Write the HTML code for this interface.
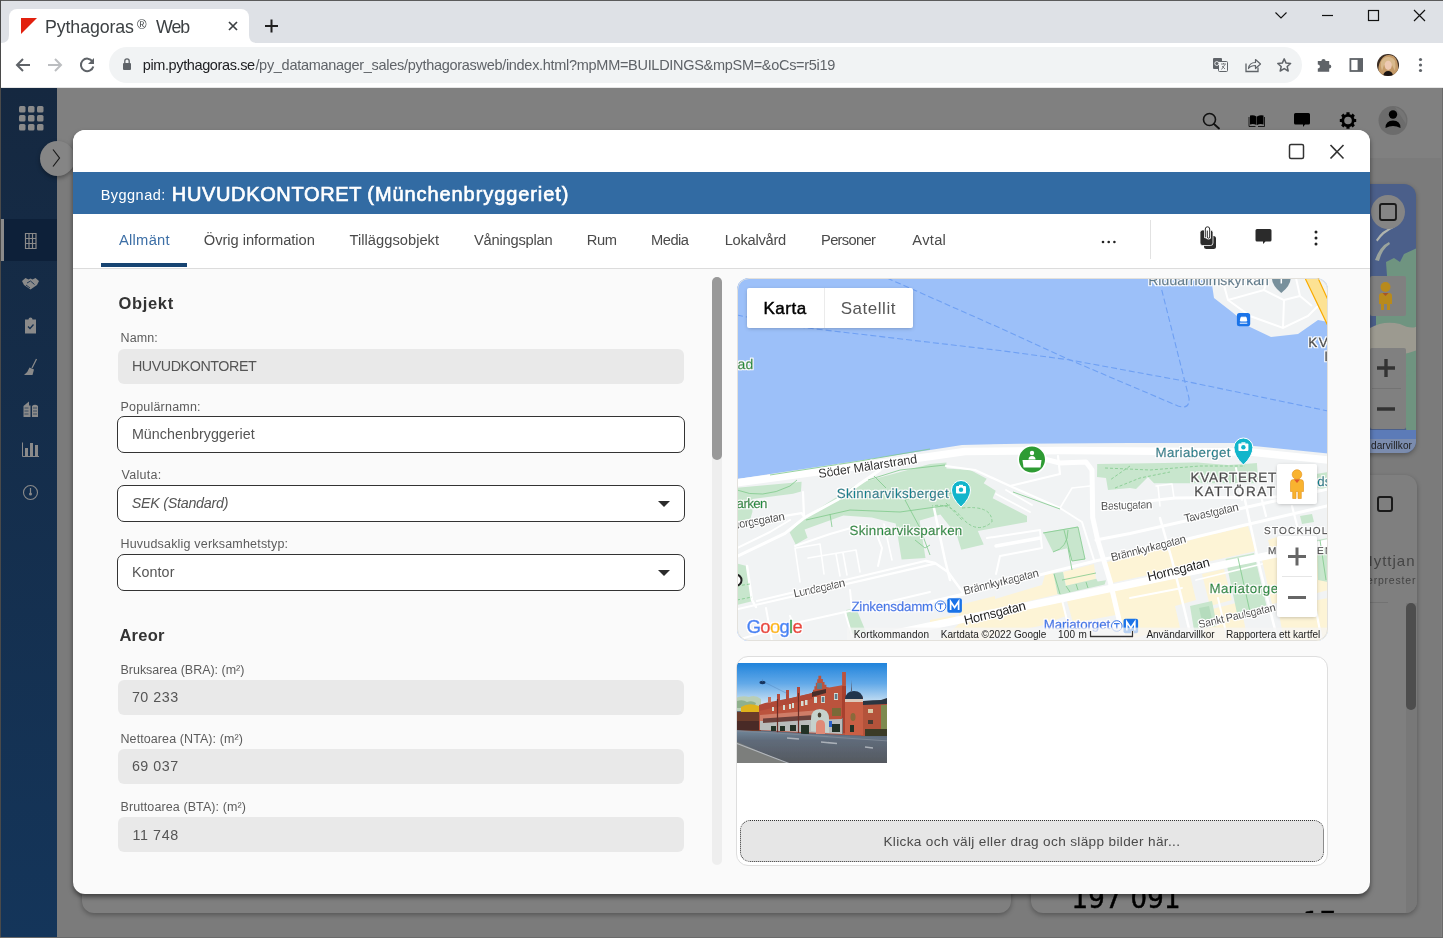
<!DOCTYPE html>
<html lang="sv">
<head>
<meta charset="utf-8">
<title>Pythagoras® Web</title>
<style>
*{box-sizing:border-box;margin:0;padding:0}
html,body{width:1443px;height:938px;overflow:hidden}
body{position:relative;background:#808080;font-family:"Liberation Sans",sans-serif;color:#333}
.abs{position:absolute}
/* browser chrome */
#chrome{position:absolute;left:0;top:0;width:1443px;height:88px;background:#fff}
#tabstrip{position:absolute;left:0;top:0;width:1443px;height:43px;background:#dee1e6}
#wintop{position:absolute;left:0;top:0;width:1443px;height:1px;background:#5b5b5b}
#winleft{position:absolute;left:0;top:0;width:1px;height:938px;background:#4a4a4a}
#tab{position:absolute;left:9px;top:9px;width:240px;height:34px;background:#fff;border-radius:8px 8px 0 0}
#tab .title{position:absolute;left:36px;top:5px;font-size:18px;color:#3c4043;white-space:nowrap;line-height:24px}
#omni{position:absolute;left:109px;top:47px;width:1193px;height:36px;border-radius:18px;background:#f1f3f4}
#url{position:absolute;left:34px;top:9px;font-size:14px;line-height:18px;color:#5f6368;white-space:nowrap}
#url b{font-weight:normal;color:#202124}
#chromeline{position:absolute;left:0;top:87px;width:1443px;height:1px;background:#e6e6e6}
/* app */
#sidebar{position:absolute;left:1px;top:88px;width:56px;height:850px;background:linear-gradient(#152840,#14355a)}
#navactive{position:absolute;left:0;top:131px;width:56px;height:42px;background:#0d2039}
#navactive:before{content:"";position:absolute;left:0;top:0;width:3px;height:42px;background:#8b8b8b}
/* dialog */
#dialog{position:absolute;left:73px;top:130px;width:1297px;height:764px;background:#fafafa;border-radius:12px;box-shadow:0 3px 5px rgba(0,0,0,.5);overflow:hidden}
#dhead{position:absolute;left:0;top:0;width:1297px;height:42px;background:#fff}
#dtitle{position:absolute;left:0;top:42px;width:1297px;height:42px;background:#326ba3;color:#fff;white-space:nowrap}
#dtitle .l{position:absolute;left:28px;top:14px;font-size:15px;line-height:18px}
#dtitle .t{position:absolute;left:99px;top:8px;font-size:21px;line-height:26px;font-weight:bold}
#tabs{position:absolute;left:0;top:84px;width:1297px;height:55px;background:#fff;border-bottom:1px solid #dcdcdc}
#tabs span{position:absolute;top:16px;font-size:15px;line-height:18px;color:#4a4a4a;white-space:nowrap}
#tabs .a{color:#3a6ea5}
#tabul{position:absolute;left:28px;top:133px;width:86px;height:4px;background:#174472}
.h{position:absolute;font-size:17px;font-weight:bold;color:#333;line-height:20px;white-space:nowrap}
.lb{position:absolute;font-size:13px;color:#555;line-height:16px;white-space:nowrap}
.ro{position:absolute;left:45px;width:566px;height:35px;border-radius:6px;background:#e9e9e9;font-size:15px;color:#4a4a4a;line-height:35px;padding-left:14px;white-space:nowrap}
.in{position:absolute;left:44px;width:568px;height:37px;border-radius:7px;background:#fff;border:1px solid #333;font-size:15px;color:#4a4a4a;line-height:35px;padding-left:14px;white-space:nowrap}
.caret{position:absolute;right:14px;top:15px;width:0;height:0;border:6px solid transparent;border-top:6px solid #2b2b2b;border-bottom:0}

#map{will-change:transform;position:absolute;left:664px;top:148px;width:591px;height:363px;border-radius:12px;overflow:hidden;background:#9cc0f9}
#map:after{content:"";position:absolute;left:0;top:0;width:591px;height:363px;border-radius:12px;border:1px solid #e3e1dc;box-sizing:border-box}
#mtype{position:absolute;left:10px;top:10px;width:166px;height:40px;background:#fff;border-radius:2px;box-shadow:0 1px 4px -1px rgba(0,0,0,.3);font-size:18px;line-height:40px;white-space:nowrap}
#mtype b{position:absolute;left:17px;top:0;font-weight:bold;color:#000;font-size:17.5px}
#mtype i{position:absolute;left:77px;top:0;width:1px;height:40px;background:#ebebeb}
#mtype span{position:absolute;left:94px;top:0;color:#565656}
.mctl{position:absolute;left:540px;width:40px;background:#fff;border-radius:2px;box-shadow:0 1px 4px -1px rgba(0,0,0,.3)}
#mfoot{position:absolute;left:0;top:349px;width:591px;height:14px;font-size:10px;line-height:14px;color:#222;white-space:nowrap}
#mfoot span{position:absolute;top:0;height:14px;background:rgba(245,245,245,.7);padding:0 6px}
#imgpanel{position:absolute;left:663px;top:526px;width:592px;height:210px;border-radius:12px;background:#fff;border:1px solid #dedede;overflow:hidden}
#drop{position:absolute;left:3px;top:163px;width:584px;height:42px;border-radius:10px;background:#e6e6e6;border:1px dotted #333;font-size:14px;line-height:41px;text-align:center;color:#4a4a4a}
#sbtrack{position:absolute;left:639px;top:147px;width:10px;height:588px;background:#eee;border-radius:5px}
#sbthumb{position:absolute;left:639px;top:147px;width:10px;height:183px;background:#999;border-radius:5px}
#txt{position:absolute;left:0;top:0;width:0;height:0;will-change:transform}
#txt span{position:absolute;line-height:20px;white-space:nowrap}
</style>
</head>
<body>
<div id="chrome">
  <div id="tabstrip"></div>
  <div id="tab"></div>
  <div id="omni"></div>

  <svg class="abs" style="left:0;top:0" width="1443" height="88" viewBox="0 0 1443 88" fill="none">
    <!-- tab curve feet -->
    <path d="M1 43 Q9 43 9 35 V43Z M257 43 Q249 43 249 35 V43Z" fill="#fff"/>
    <!-- favicon -->
    <path d="M21 18 H37 L21 34Z" fill="#e2200e"/>
    <!-- tab close -->
    <path d="M229 22 l8 8 M237 22 l-8 8" stroke="#3c4043" stroke-width="1.7"/>
    <!-- new tab plus -->
    <path d="M265 26 h13 M271.5 19.5 v13" stroke="#1f1f1f" stroke-width="2"/>
    <!-- window controls -->
    <path d="M1275.5 12.5 l5.5 5.5 l5.5 -5.5" stroke="#111" stroke-width="1.1"/>
    <path d="M1322 15.5 h11" stroke="#111" stroke-width="1.2"/>
    <rect x="1368.5" y="10.5" width="10" height="10" stroke="#111" stroke-width="1.2"/>
    <path d="M1414 10 l11 11 M1425 10 l-11 11" stroke="#111" stroke-width="1.2"/>
    <!-- back -->
    <path d="M30 65 H17 M23 59 l-6 6 l6 6" stroke="#5f6368" stroke-width="2"/>
    <!-- forward -->
    <path d="M48 65 H61 M55 59 l6 6 l-6 6" stroke="#bcbec1" stroke-width="2"/>
    <!-- reload -->
    <path d="M92.5 61.5 A6.3 6.3 0 1 0 93.3 66.5" stroke="#5f6368" stroke-width="2"/>
    <path d="M94 58 v6 h-6z" fill="#5f6368"/>
    <!-- lock -->
    <rect x="123" y="63" width="8" height="7" rx="1" fill="#5f6368"/>
    <path d="M124.8 63 v-2 a2.2 2.2 0 0 1 4.4 0 v2" stroke="#5f6368" stroke-width="1.3"/>
    <!-- translate -->
    <rect x="1213" y="58" width="9" height="11" rx="1" fill="#5f6368"/>
    <rect x="1218.5" y="61.5" width="9" height="10" rx="1" fill="#f1f3f4" stroke="#5f6368" stroke-width="1"/>
    <path d="M1221 64 h5 M1223.5 63 v1 M1221.5 69.5 l3.5 -5 M1222 66 l3 3" stroke="#5f6368" stroke-width=".8"/>
    <circle cx="1216.8" cy="63.5" r="2" stroke="#f1f3f4" stroke-width=".9"/>
    <!-- share -->
    <path d="M1246 63.5 v8 h12 v-4" stroke="#5f6368" stroke-width="1.3"/>
    <path d="M1248.5 68.5 c0.5 -4 3 -6 7 -6 v-3 l5 4.5 l-5 4.5 v-3 c-3 0 -5 0.5 -7 3z" stroke="#5f6368" stroke-width="1.2" stroke-linejoin="round"/>
    <!-- star -->
    <path d="M1284.2 58.9 l1.9 4.2 l4.5 0.45 l-3.4 3 l1 4.45 l-4 -2.4 l-4 2.4 l1 -4.45 l-3.4 -3 l4.5 -0.45z" stroke="#5f6368" stroke-width="1.5" stroke-linejoin="round"/>
    <!-- puzzle -->
    <path d="M1317.8 61 h3.6 a2.1 2.1 0 1 1 4.2 0 h3.6 v3.4 a2.1 2.1 0 1 1 0 4.2 v3.2 h-11.4 v-3.2 a2.1 2.1 0 1 0 0 -4.2z" fill="#5f6368"/>
    <!-- side panel -->
    <rect x="1350.4" y="59" width="11.7" height="12" stroke="#5f6368" stroke-width="1.8"/>
    <rect x="1357.6" y="59" width="5" height="12" fill="#5f6368"/>
    <!-- avatar -->
    <clipPath id="avc"><circle cx="1388" cy="65" r="11"/></clipPath>
    <g clip-path="url(#avc)">
      <rect x="1377" y="54" width="22" height="22" fill="#3a2c22"/>
      <path d="M1379 76 q-2 -10 2 -16 q3 -5 8 -5 q6 0 8 6 q2 6 1 15z" fill="#c49a68"/>
      <path d="M1381 62 q2 -5 7 -5 q5 0 7 4 q1 5 0 10 l-3 -6 h-8 l-2 6 q-2 -5 -1 -9z" fill="#d8b98c"/>
      <ellipse cx="1388.2" cy="65.3" rx="3.6" ry="4.6" fill="#edc9b2"/>
      <path d="M1383 76 q1 -5 5.2 -5 q4 0 5 5z" fill="#1a1412"/>
    </g>
    <!-- menu -->
    <circle cx="1420.5" cy="59.5" r="1.6" fill="#5f6368"/><circle cx="1420.5" cy="65" r="1.6" fill="#5f6368"/><circle cx="1420.5" cy="70.5" r="1.6" fill="#5f6368"/>
  </svg>
  <div id="chromeline"></div>
  <div id="wintop"></div>
</div>

<div id="pagebg" style="will-change:transform">
  <div class="abs" style="left:57px;top:88px;width:1386px;height:70px;background:#808080"></div>
  <div class="abs" style="left:57px;top:158px;width:1386px;height:780px;background:#7b7b7b"></div>
  <div class="abs" style="left:1441px;top:88px;width:2px;height:850px;background:#818181"></div>
  <!-- header icons -->
  <svg class="abs" style="left:1190px;top:100px" width="230" height="42" viewBox="1190 100 230 42" fill="none">
    <circle cx="1209.5" cy="119.5" r="6" stroke="#111" stroke-width="1.6"/>
    <path d="M1214 124 l5 4.5" stroke="#111" stroke-width="1.8" stroke-linecap="round"/>
    <path d="M1250 115.5 q3.5 -1 6.5 1 v8.5 q-3 -1.5 -6.5 -0.5z M1263.5 115.5 q-3.5 -1 -6.5 1 v8.5 q3 -1.5 6.5 -0.5z" fill="#000"/>
    <path d="M1249 117 v9.5 h6.5 M1264.5 117 v9.5 h-6.5" stroke="#000" stroke-width=".8"/>
    <path d="M1295.5 113 h13 q1.5 0 1.5 1.5 v8.5 q0 1.5 -1.5 1.5 h-3.5 l-2 2.5 v-2.5 h-7.5 q-1.5 0 -1.5 -1.5 v-8.5 q0 -1.5 1.5 -1.5z" fill="#000"/>
    <circle cx="1348" cy="120.5" r="5.2" stroke="#000" stroke-width="2.8"/>
    <g stroke="#000" stroke-width="3.2" stroke-linecap="butt">
      <path d="M1348 112.3 v3 M1348 125.7 v3 M1339.8 120.5 h3 M1353.2 120.5 h3"/>
      <path d="M1342.2 114.7 l2.1 2.1 M1351.7 124.2 l2.1 2.1 M1342.2 126.3 l2.1 -2.1 M1351.7 116.8 l2.1 -2.1"/>
    </g>
    <circle cx="1393" cy="120.5" r="14.5" fill="#6c6c6c"/>
    <path d="M1395 107 a14.5 14.5 0 0 1 11 17 z" fill="#757575"/>
    <circle cx="1393" cy="114.5" r="4.2" fill="#000"/>
    <path d="M1385.5 128 q0 -7.5 7.5 -7.5 q7.5 0 7.5 7.5 q-7.5 -4 -15 0z" fill="#000"/>
  </svg>
  <!-- map card -->
  <div class="abs" style="left:1300px;top:184px;width:116px;height:269px;border-radius:12px;background:#4b5f8a;box-shadow:0 2px 5px rgba(0,0,0,.3);overflow:hidden">
    <svg class="abs" style="left:70px;top:0" width="47" height="269" viewBox="1370 184 47 269" fill="none">
      <path d="M1375 260 q5 -14 14 -18 l1 2 q-8 5 -11 17z" fill="#9aa39c"/>
      <path d="M1376 240 q6 -10 18 -14 l0.5 1.5 q-11 5 -17 14z" fill="#b0b4ae"/>
      <path d="M1386 262 l8 -4 l6 4 l4 -8 l13 -6 v130 l-10 14 l-12 -10 l-9 -30 l-10 -20 v-30 l12 -12z" fill="#6f9480"/>
      <path d="M1370 328 q14 -8 30 -4 q12 6 17 2 v24 q-20 8 -47 4z" fill="#9c9a90"/>
      <path d="M1400 380 l17 -10 v60 l-10 6 z" fill="#6f9480"/>
      <path d="M1370 430 h47 v23 h-47z" fill="#5c7bb8"/>
      <rect x="1370" y="276" width="36" height="40" rx="2" fill="#808080"/>
      <rect x="1370" y="348" width="36" height="81" rx="2" fill="#808080"/>
      <path d="M1372 388.5 h29" stroke="#737373" stroke-width="1"/>
      <path d="M1377 368 h18 M1386 359 v18" stroke="#333" stroke-width="3.4"/>
      <path d="M1377 409 h18" stroke="#333" stroke-width="3.4"/>
      <circle cx="1385.5" cy="287" r="5" fill="#b88a1c"/>
      <path d="M1379 296 q0 -3 3 -3 h7 q3 0 3 3 v8 h-2 v6 h-3 v-6 h-3 v6 h-3 v-6 h-2z" fill="#b88a1c"/>
      <path d="M1382.5 293 l3 3 l3 -3z" fill="#a5562a"/>
      <circle cx="1388" cy="212" r="17" fill="#858585"/>
      <rect x="1380" y="204" width="16" height="16" rx="2" stroke="#1a1a1a" stroke-width="1.8"/>
    </svg>
    <div class="abs" style="left:40px;top:255px;width:76px;height:14px;padding-left:31px;font-size:10px;letter-spacing:.1px;line-height:14px;color:#1c1c1c;white-space:nowrap;background:rgba(150,155,165,.55)">darvillkor</div>
  </div>
  <!-- lower right card -->
  <div class="abs" style="left:1031px;top:475px;width:386px;height:438px;border-radius:12px;background:#7f7f7f;box-shadow:0 2px 5px rgba(0,0,0,.3);overflow:hidden">
    <div class="abs" style="left:375px;top:128px;width:11px;height:310px;background:#787878"></div>
    <div class="abs" style="left:375px;top:128px;width:10px;height:107px;border-radius:5px;background:#4d4d4d"></div>
    <div class="abs" style="left:346px;top:21px;width:16px;height:16px;border:2px solid #1a1a1a;border-radius:3px"></div>
    <div class="abs" style="left:330.8px;top:73.6px;width:54.2px;overflow:hidden;font-size:15px;letter-spacing:1px;line-height:24px;color:#444;white-space:nowrap">Nyttjand</div>
    <div class="abs" style="left:336px;top:97.3px;width:49px;overflow:hidden;font-size:10.5px;letter-spacing:.8px;line-height:16px;color:#444;white-space:nowrap">erprester</div>
    <div class="abs" style="left:330px;top:127px;width:27px;height:1px;background:#727272"></div>
    <div class="abs" style="left:40.5px;top:406.7px;font-family:'DejaVu Sans',sans-serif;font-size:26px;letter-spacing:.25px;-webkit-text-stroke:.45px #000;line-height:34px;color:#000;white-space:nowrap">197 091</div>
    <div class="abs" style="left:272px;top:431.8px;font-family:'DejaVu Sans',sans-serif;font-size:26px;-webkit-text-stroke:.45px #000;line-height:30px;color:#000;white-space:nowrap">17</div>
  </div>
  <!-- lower left card -->
  <div class="abs" style="left:82px;top:475px;width:929px;height:438px;border-radius:12px;background:#7f7f7f;box-shadow:0 2px 5px rgba(0,0,0,.3)"></div>
</div>
<div id="sidebar"><div id="navactive"></div>
  <svg class="abs" style="left:0;top:0" width="56" height="850" viewBox="1 88 56 850" fill="none">
    <g fill="#8a8a8a">
      <rect x="19" y="106" width="6.5" height="6.5" rx="1.5"/><rect x="28" y="106" width="6.5" height="6.5" rx="1.5"/><rect x="37" y="106" width="6.5" height="6.5" rx="1.5"/>
      <rect x="19" y="115" width="6.5" height="6.5" rx="1.5"/><rect x="28" y="115" width="6.5" height="6.5" rx="1.5"/><rect x="37" y="115" width="6.5" height="6.5" rx="1.5"/>
      <rect x="19" y="124" width="6.5" height="6.5" rx="1.5"/><rect x="28" y="124" width="6.5" height="6.5" rx="1.5"/><rect x="37" y="124" width="6.5" height="6.5" rx="1.5"/>
    </g>
    <!-- building grid -->
    <path d="M25.5 233.5 h10.5 v15 h-10.5z M29 233.5 v15 M32.5 233.5 v15 M25.5 238.5 h10.5 M25.5 243.5 h10.5" stroke="#8a8a8a" stroke-width="1.2"/>
    <!-- handshake -->
    <path d="M22 281 l3.5 -3 l3 1.5 l2 -1 l2 1 l3 -1.5 l3.5 3 l-2 4 l-6.5 4.5 l-6.5 -4.5z" fill="#8a8a8a"/>
    <path d="M27 283 l3.5 -2 l4 3.5 M26 285 l4 3" stroke="#16304f" stroke-width=".9"/>
    <!-- clipboard -->
    <path d="M25 319.5 h11 v14 h-11z M28.5 319.5 a2 2 0 0 1 4 0z" fill="#8a8a8a"/>
    <path d="M28 326.5 l2 2 l3.5 -4" stroke="#16304f" stroke-width="1.3"/>
    <!-- broom -->
    <path d="M36.5 359 l-4.5 9" stroke="#8a8a8a" stroke-width="1.3"/>
    <path d="M29.5 367.5 l4.5 2 l-1.5 5.5 h-8.5 q4 -3 5.5 -7.5z" fill="#8a8a8a"/>
    <!-- buildings -->
    <path d="M23.5 417 v-11 l5.5 -4.5 v4 h1.5 v11.5z M32 417 v-11 q3 -2.5 6 0 v11z" fill="#8a8a8a"/>
    <path d="M24.5 408 h4 M24.5 411 h4 M24.5 414 h4 M33 408 h4 M33 411 h4 M33 414 h4" stroke="#17324f" stroke-width=".7"/>
    <!-- bar chart -->
    <path d="M22.5 442.5 v14 h16.5" stroke="#8a8a8a" stroke-width="1"/>
    <rect x="25" y="448" width="3" height="8" fill="#8a8a8a"/><rect x="30" y="443" width="3" height="13" fill="#8a8a8a"/><rect x="35" y="445" width="3" height="11" fill="#8a8a8a"/>
    <!-- gauge -->
    <circle cx="30.5" cy="492.5" r="7" stroke="#8a8a8a" stroke-width="1.1"/>
    <path d="M30.5 488 v5" stroke="#8a8a8a" stroke-width="1.2"/><circle cx="30.5" cy="494" r="1.5" fill="#8a8a8a"/>
  </svg>
</div>
  <!-- sidebar toggle -->
  <div class="abs" style="left:40px;top:141px;width:35px;height:35px;border-radius:50%;background:#858585;box-shadow:0 2px 4px rgba(0,0,0,.35)"></div>
  <svg class="abs" style="left:50px;top:148px" width="12" height="20" viewBox="0 0 12 20" fill="none"><path d="M3 1.5 l6.5 8.5 l-6.5 8.5" stroke="#1a1a1a" stroke-width="1.2"/></svg>
<div id="winleft"></div>
<div class="abs" style="left:1442px;top:88px;width:1px;height:850px;background:#6a6a6a"></div>
<div class="abs" style="left:0;top:937px;width:1443px;height:1px;background:#6a6a6a"></div>

<div id="dialog">
  <div id="dhead"></div>
  <div id="dtitle"></div>
  <div id="tabs"></div>

  <svg class="abs" style="left:1200px;top:8px" width="90" height="30" viewBox="1273 138 90 30" fill="none">
    <rect x="1289.5" y="144.5" width="14" height="14" rx="1.5" stroke="#333" stroke-width="1.5"/>
    <path d="M1330.5 145 l13 13.5 M1343.5 145 l-13 13.5" stroke="#333" stroke-width="1.6"/>
  </svg>
  <svg class="abs" style="left:1017px;top:85px" width="260" height="53" viewBox="1090 215 260 53" fill="none">
    <circle cx="1103" cy="242" r="1.3" fill="#222"/><circle cx="1108.7" cy="242" r="1.3" fill="#222"/><circle cx="1114.4" cy="242" r="1.3" fill="#222"/>
    <path d="M1150.5 220 v39" stroke="#e2e2e2" stroke-width="1"/>
    <rect x="1204" y="236" width="12" height="13" rx="2.5" fill="#2b2b2b"/>
    <rect x="1200" y="230" width="13" height="15.5" rx="2.5" fill="#2b2b2b" stroke="#fff" stroke-width=".8"/>
    <path d="M1205.3 237 v-8 a2.2 2.2 0 0 1 4.4 0 v8 a1.2 1.2 0 0 1 -2.4 0 v-6" stroke="#fff" stroke-width="2.6" stroke-linecap="round"/>
    <path d="M1205.3 237 v-8 a2.2 2.2 0 0 1 4.4 0 v8 a1.2 1.2 0 0 1 -2.4 0 v-6" stroke="#2b2b2b" stroke-width="1" stroke-linecap="round"/>
    <path d="M1257 229 h13 q1.5 0 1.5 1.5 v9.5 q0 1.5 -1.5 1.5 h-4.5 l-2.5 2.5 v-2.5 h-6 q-1.5 0 -1.5 -1.5 v-9.5 q0 -1.5 1.5 -1.5z" fill="#2b2b2b"/>
    <circle cx="1316" cy="232" r="1.5" fill="#222"/><circle cx="1316" cy="238" r="1.5" fill="#222"/><circle cx="1316" cy="244" r="1.5" fill="#222"/>
  </svg>
  <div id="tabul"></div>

  <div id="sbtrack"></div><div id="sbthumb"></div>
  <div id="map">
<svg id="mapsvg" class="abs" style="left:0;top:0" width="591" height="363" viewBox="737 278 591 363" font-family="'Liberation Sans',sans-serif" text-rendering="geometricPrecision">
  <rect x="737" y="278" width="591" height="363" fill="#9cc0f9"/>
  <!-- ferry lines -->
  <g fill="none" stroke="#6fa0f3" stroke-width="1.1" stroke-dasharray="6 3">
    <path d="M737 315 L790 326 L1000 350.5 L1070 360 L1184 381 L1328 411"/>
    <path d="M887 278 L1000 328 L1070 360 L1178 406 Q1190 410 1189 398 L1161 287"/>
  </g>
  <!-- Riddarholmen island -->
  <path d="M1211 278 L1214 298 L1232 312 L1250 327 L1271 337 L1298 334 L1318 320 L1328 322 L1328 278Z" fill="#f1f3f4"/>
  <g fill="none" stroke="#fff" stroke-width="2">
    <path d="M1222 278 L1228 300 L1250 316 L1283 328 L1308 316 L1318 306"/>
    <path d="M1228 300 L1264 290 L1284 300 L1283 328"/>
    <path d="M1264 290 L1268 278 M1284 300 L1300 296 L1296 278 M1300 296 L1312 306"/>
  </g>
  <path d="M1305 278 L1328 326 L1328 300 L1318 278Z" fill="#fde293"/>
  <path d="M1305 278 L1328 326 M1318 278 L1328 300" stroke="#f9ab00" stroke-width="1.2" fill="none"/>
  <!-- south land -->
  <path d="M737 479 L930 450.1 L962 445 L1020 443.7 L1130 443 L1240 443 L1254 446 L1328 453.5 L1328 641 L737 641Z" fill="#f1f3f4"/>
  <!-- yellow commercial -->
  <g fill="#fdf4d6">
    <path d="M959 605 L995 596 L995 599 L1042 585 L1045 575 L1053 573 L1059 594 L959 618Z"/>
    <path d="M1063 572 L1094 564 L1096 580 L1066 586Z"/>
    <path d="M1107 562 L1130 556 L1175 545 L1210 534 L1215 534 L1248 526 L1256 551 L1112 583Z"/>
    <path d="M1268 540 L1277 537 L1277 546 L1270 548Z"/>
    <path d="M930 620 L955 615 L957 622 L930 628Z"/>
    <path d="M960 623 L1062 601 L1066 616 L1040 626 L1000 634 L985 641 L940 641Z"/>
    <path d="M1067 601 L1110 591 L1116 615 L1073 623Z"/>
    <path d="M1114 590 L1165 580 L1190 575 L1196 600 L1175 606 L1180 628 L1150 634 L1123 641 L1120 641Z"/>
    <path d="M1202 574 L1224 569 L1232 600 L1210 606Z"/>
    <path d="M1262 560 L1280 556 L1290 600 L1272 604Z M1296 552 L1328 546 L1328 590 L1306 596Z"/>
    <path d="M1200 612 L1240 602 L1248 641 L1206 641Z M1278 608 L1328 598 L1328 641 L1284 641Z"/>
  </g>
  <!-- parks -->
  <g fill="#c8e6cd">
    <path d="M737 487.8 L787 483.3 L801.6 481.8 L801 491.5 L793 493.7 L752.4 499 L752.4 512 L750 520 L737 521Z"/>
    <path d="M858.4 483.3 L930 463.9 L946.4 462.4 L946.4 468.4 L970.3 469.9 L986.7 478.8 L983.7 483.3 L995.7 490.7 L992.7 498.2 L1027 516.1 L1027 522.1 L977.8 531 L983.7 544.5 L961.3 549.7 L956.9 535.5 L940.4 514.6 L930 517.6 L919.6 520.6 L925.5 557.9 L901.6 559.4 L895.7 523.6 L871.8 517.6 L843.4 515.4 L804.6 529.6 L807.6 537.8 L795.7 544.5 L789.7 532.5 L804.6 517.6Z"/>
    <path d="M1097.2 463.9 L1197 462.4 L1228 465 L1256.9 463.1 L1258.4 483.3 L1187 483.3 L1154 483.3 L1148 477 L1136 489 L1130 488 L1108 490 L1106 478 L1097 477Z"/>
    <path d="M1043.4 532.5 L1077.8 526.6 L1085.2 559.4 L1071.8 561 L1068 548 L1053 552Z"/>
    <path d="M1225.5 559 L1254 553 L1268 612 L1238 618Z"/>
    <path d="M1190 606 L1212 601 L1217 626 L1194 630Z"/>
    <path d="M737 563.6 L747.5 566.3 L753 601 L737 605Z"/>
    <path d="M1053.4 573.3 L1063 571.9 L1065.8 585.7 L1096.3 578.8 L1097.7 581.6 L1106 580.2 L1104.6 584.4 L1060.3 594.7 L1057.5 594Z"/>
    <path d="M846 610 L856 608 L866 632 L850 634Z"/>
    <path d="M1317 540 L1328 538 L1328 582 L1318 580Z"/>
    <path d="M1304 476 L1328 472 L1328 490 L1318 488Z"/>
    <path d="M1300 516 L1312 514 L1314 522 L1302 524Z"/>
  </g>
  <path d="M1199 608 L1209 606 L1212 619 L1202 621Z" fill="#b5dcbd"/>
  <!-- roads -->
  <g fill="none" stroke="#fff" stroke-linecap="round" stroke-linejoin="round">
    <path d="M737 482.8 L930 456.5 L965 451.5 L1064 450.5 L1130 451 L1250 452 L1328 460" stroke-width="7.5"/>
    <path d="M1040 458 L1060 463 L1086 462 L1092 470 L1092.7 517.6 L1097.7 540 L1110.2 581.6 L1124 641" stroke-width="5"/>
    <path d="M880 636.4 L930 626 L1130 584.4 L1328 543" stroke-width="7.5"/>
    <path d="M930 602 L964 594 L1002 584.4 L1096.3 560.8 L1130 553.9 L1186.7 539.3 L1245 525 L1328 505.7" stroke-width="3"/>
    <path d="M1096 540 L1130 533.5 L1212 515 L1328 489" stroke-width="3"/>
    <path d="M1130 503 L1175 498 L1277 497" stroke-width="3"/>
    <path d="M737 609.3 L935 563.6 M757 601 L926 560.8" stroke-width="2.2"/>
    <path d="M926 561 L935 563 L948 572 L964 594" stroke-width="2.5"/>
    <path d="M737 556.4 L785 533.3 L804.6 517.6 L837.5 499.7 L858.4 484.8 L880 470" stroke-width="3"/>
    <path d="M737 548 L770 532 L790 520" stroke-width="2"/>
    <path d="M737 523.6 L801.6 513.1 L804.6 517.6 M803 492 L804 516" stroke-width="2.2"/>
    <path d="M747 566 L752 600 L756 607" stroke-width="2.5"/>
    <path d="M795 546 L830 534 L858 526 L875 530 L882 548 L878 566" stroke-width="2"/>
    <path d="M795 548 L800 582 M796 548 L820 544 L824 574 M808 558 L856 550 L860 572 M836 554 L840 576 M843 553 L847 575 M884 524 L892 560" stroke-width="1.6"/>
    <path d="M737 640 L800 622 L845 612 L930 592 M766 608 L772 641 M845 612 L852 636 M790 616 L794 626 M850 590 L852 610" stroke-width="2"/>
    <path d="M934 508 L945 560 L950 580" stroke-width="2.5"/>
    <path d="M946 466 L975 470 L1010 486 L1060 474 L1058 456" stroke-width="2.2"/>
    <path d="M1010 486 L1060 508 L1082 522 L1094 560" stroke-width="2"/>
    <path d="M987 538 L1040 530 L1042 548 L1000 556 L996 574" stroke-width="2"/>
    <path d="M996 546 L1040 538" stroke-width="3.5"/>
    <path d="M996 494 L1030 512 M1006 490 L1032 505" stroke-width="1.8"/>
    <path d="M1060 508 L1072 488 L1090 486" stroke-width="1.6"/>
    <path d="M1160 518 L1172 560 L1182 600 L1192 641" stroke-width="2.5"/>
    <path d="M1245 500 L1258 560 L1270 610 L1278 641" stroke-width="2.5"/>
    <path d="M1236 468 L1242 500" stroke-width="2"/>
    <path d="M1262 500 L1266 516 M1292 506 L1302 545 L1312 590 L1322 641" stroke-width="2.2"/>
    <path d="M1062 600 L1072 641 M1218 598 L1228 641" stroke-width="2"/>
    <path d="M1156 486 L1172 484 L1174 498 M1158 486 L1160 506" stroke-width="1.6"/>
    <path d="M1196 580 L1262 564 M1130 598 L1182 588" stroke-width="1.8"/>
  </g>
  <!-- park paths -->
  <g fill="none" stroke="#7fc98a" stroke-width=".8">
    <path d="M737 490 Q762 500 790 486 M790 486 L797 480"/>
    <path d="M770 475 L860 461 L930 449"/>
    <path d="M806 520 L850 510 L900 512 L950 505 M830 514 L832 527 M868 480 L900 470 L945 465 M874 476 L886 488 M905 500 L920 528 L930 555 M905 500 L935 490 L960 495 M915 540 L925 548 L930 545"/>
    <path d="M1013 492 L1060 509"/>
    <path d="M1043 533 L1078 527 M1053 552 Q1068 548 1068 530 M1064 530 L1072 561 L1085 559 L1078 527 M1068 548 L1072 570"/>
    <path d="M1054 574 L1060 594 M1062 580 L1096 573 M1066 586 L1070 592 M1076 584 L1078 590 M1086 582 L1088 588"/>
    <path d="M1238 558 L1250 612 M1304 478 L1328 482 M1320 540 L1326 580"/>
  </g>
  <g fill="none" stroke="#7fc98a" stroke-width=".8" stroke-dasharray="3 2">
    <path d="M962 508 Q992 505 992 522 Q978 534 964 520 Q950 502 932 506 M946 503 L962 520"/>
    <path d="M1105 468 L1150 470 L1200 466 L1245 466 M1115 488 L1140 478 L1170 472 M1130 466 L1110 480"/>
    <path d="M737 586 L750 584 M737 600 L752 597"/>
  </g>
  <!-- labels -->
  <defs><filter id="mh" x="-5%" y="-30%" width="110%" height="160%"><feMorphology in="SourceAlpha" operator="dilate" radius="1.2" result="d"/><feGaussianBlur in="d" stdDeviation=".35" result="b"/><feFlood flood-color="#fff"/><feComposite in2="b" operator="in"/><feMerge><feMergeNode/><feMergeNode in="SourceGraphic"/></feMerge></filter></defs>
  <g fill="#4f4f4f" stroke="#fff" stroke-width="2.5" paint-order="stroke" stroke-linejoin="round" font-size="11.5">
    <text transform="translate(819.1 478.1) rotate(-8.8)" font-size="12.5" fill="#333" textLength="99.7">Söder Mälarstrand</text>
    <text transform="translate(734.2 528.9) rotate(-10)" textLength="51.8">borgsgatan</text>
    <text transform="translate(794.6 597.5) rotate(-12.5)" textLength="52.5">Lundagatan</text>
    <text transform="translate(964.6 594.7) rotate(-13.8)" textLength="77">Brännkyrkagatan</text>
    <text transform="translate(965.3 624.8) rotate(-14)" font-size="13" fill="#222" textLength="63">Hornsgatan</text>
    <text transform="translate(1101 510) rotate(-2)" textLength="51.5">Bastugatan</text>
    <text transform="translate(1185 522.5) rotate(-12.5)" textLength="55.5">Tavastgatan</text>
    <text transform="translate(1112 561.3) rotate(-14.3)" textLength="77">Brännkyrkagatan</text>
    <text transform="translate(1148.4 581.3) rotate(-13.8)" font-size="13" fill="#222" textLength="64">Hornsgatan</text>
    <text transform="translate(1199.3 628.2) rotate(-12.9)" font-size="11" textLength="79">Sankt Paulsgatan</text>
  </g>
  <g fill="#444" stroke="#444" stroke-width=".5" font-size="13.5" filter="url(#mh)">
    <text x="1190.6" y="482" textLength="85.6">KVARTERET</text>
    <text x="1194.2" y="496.1" textLength="80.8">KATTÖRAT</text>
    <text x="1264" y="534.4" font-size="10" stroke-width=".35" textLength="73">STOCKHOLM</text>
    <text x="1268" y="554.3" font-size="10" stroke-width=".35">M</text>
    <text x="1317" y="554.3" font-size="10" stroke-width=".35" letter-spacing="1.3">EN</text>
    <text x="1308.2" y="346.9" letter-spacing="1.6">KV</text>
    <text x="1324.2" y="361.3">I</text>
  </g>
  <text x="1148.2" y="284.6" font-size="14" fill="#5b7a8c" stroke="#5b7a8c" stroke-width=".3" textLength="120.7" filter="url(#mh)">Riddarholmskyrkan</text>
  <g font-size="13.3" stroke-width=".4" filter="url(#mh)">
    <text x="836.7" y="498" fill="#12838f" stroke="#12838f" textLength="111.9">Skinnarviksberget</text>
    <text x="1155.5" y="457" fill="#12838f" stroke="#12838f" textLength="75">Mariaberget</text>
    <text x="1317.3" y="486.3" fill="#12838f" stroke="#12838f">ds</text>
    <text x="849.6" y="535" fill="#1e8e3e" stroke="#1e8e3e" textLength="112.6">Skinnarviksparken</text>
    <text x="736.6" y="508" fill="#1e8e3e" stroke="#1e8e3e" textLength="30.9">arken</text>
    <text x="737.6" y="369.2" fill="#1e8e3e" stroke="#1e8e3e" font-size="14" letter-spacing=".2">ad</text>
    <text x="1209.4" y="593" fill="#1e8e3e" stroke="#1e8e3e" textLength="73">Mariatorget</text>
    <text x="851.4" y="611" fill="#3b78e7" stroke="#3b78e7" textLength="81.8">Zinkensdamm</text>
    <text x="1043.7" y="629.4" fill="#3b78e7" stroke="#3b78e7" textLength="66.5">Mariatorget</text>
  </g>
  <!-- metro icons -->
  <g>
    <circle cx="940.5" cy="606.2" r="5.3" fill="#fff" stroke="#3b78e7" stroke-width="1"/>
    <path d="M937.7 603.8 h5.6 M940.5 603.8 v5.4" stroke="#3b78e7" stroke-width="1.2" fill="none"/>
    <rect x="947.3" y="598.2" width="14.6" height="14.6" rx="2" fill="#1a73e8"/>
    <path d="M950.6 610 v-8.5 l4 6 l4 -6 v8.5" stroke="#fff" stroke-width="1.7" fill="none"/>
    <circle cx="1116.8" cy="626" r="5.3" fill="#fff" stroke="#3b78e7" stroke-width="1"/>
    <path d="M1114 623.6 h5.6 M1116.8 623.6 v5.4" stroke="#3b78e7" stroke-width="1.2" fill="none"/>
    <rect x="1123.5" y="618.7" width="14.6" height="14.6" rx="2" fill="#1a73e8"/>
    <path d="M1126.8 630.5 v-8.5 l4 6 l4 -6 v8.5" stroke="#fff" stroke-width="1.7" fill="none"/>
    <circle cx="736" cy="580.2" r="5.5" fill="#fff" stroke="#222" stroke-width="2"/>
  </g>
  <!-- POI pins -->
  <g>
    <path d="M961 507 q-9.5 -9 -9.5 -17 a9.5 9.5 0 0 1 19 0 q0 8 -9.5 17z" fill="#12b5cb" stroke="#fff" stroke-width="1"/>
    <rect x="956" y="486" width="10" height="7.5" rx="1" fill="#fff"/><circle cx="961" cy="489.8" r="2.2" fill="#12b5cb"/><rect x="959" y="484.8" width="4" height="1.5" fill="#fff"/>
    <path d="M1243.4 465 q-9.5 -9 -9.5 -17.5 a9.5 9.5 0 0 1 19 0 q0 8.5 -9.5 17.5z" fill="#12b5cb" stroke="#fff" stroke-width="1"/>
    <rect x="1238.4" y="443.5" width="10" height="7.5" rx="1" fill="#fff"/><circle cx="1243.4" cy="447.3" r="2.2" fill="#12b5cb"/><rect x="1241.4" y="442.3" width="4" height="1.5" fill="#fff"/>
    <path d="M1281.3 293 q-9 -7 -9.5 -15 h19 q-0.5 8 -9.5 15z" fill="#78909c"/>
    <path d="M1281.3 278 v5.5" stroke="#fff" stroke-width="1.5"/>
    <rect x="1236.9" y="313" width="13.3" height="13.3" rx="2.5" fill="#1a73e8"/>
    <path d="M1240.3 321 h6.5 l-0.8 -3.8 h-4.9z M1239.8 323.2 h7.5" fill="#fff" stroke="#fff" stroke-width="1"/>
    <circle cx="1032" cy="459.6" r="13.8" fill="#2e9b33" stroke="#fff" stroke-width="1.6"/>
    <circle cx="1032" cy="453" r="2.2" fill="#fff"/>
    <path d="M1028.5 459.5 q0 -3.5 3.5 -3.5 q3.5 0 3.5 3.5z" fill="#fff"/>
    <path d="M1022.5 460 h19 l-1 7.5 h-17z" fill="#fff"/>
  </g>
  <rect x="847" y="627.6" width="481" height="14" fill="#f5f5f5" fill-opacity=".72"/>
</svg>

    <div id="mtype"><i></i></div>
    <div class="mctl" style="top:186px;height:40px">
      <svg class="abs" style="left:0;top:0" width="40" height="40" viewBox="0 0 40 40"><circle cx="20" cy="10.5" r="4.8" fill="#f9b32f" stroke="#e08f1a" stroke-width=".6"/><path d="M13.5 18.5 q0 -3 3 -3 h7 q3 0 3 3 v9 h-2.2 v7 h-3.3 v-7 h-2 v7 h-3.3 v-7 h-2.2z" fill="#f9b32f" stroke="#e08f1a" stroke-width=".6"/><path d="M17 15.5 l3 3.5 l3 -3.5z" fill="#e0572a"/></svg>
    </div>
    <div class="mctl" style="top:258px;height:81px">
      <svg class="abs" style="left:0;top:0" width="40" height="81" viewBox="0 0 40 81"><path d="M11 20.5 h18 M20 11.5 v18 M11 61.5 h18" stroke="#666" stroke-width="3" fill="none"/><path d="M5 40.5 h30" stroke="#e6e6e6" stroke-width="1"/></svg>
    </div>
    <svg class="abs" style="left:9px;top:339px" width="62" height="24" viewBox="0 0 62 24" font-family="'Liberation Sans',sans-serif" font-size="18.3"><defs><filter id="halo" x="-10%" y="-20%" width="120%" height="140%"><feMorphology in="SourceAlpha" operator="dilate" radius="1.1" result="d"/><feFlood flood-color="#fff"/><feComposite in2="d" operator="in"/><feMerge><feMergeNode/><feMergeNode in="SourceGraphic"/></feMerge></filter></defs><text x="0.7" y="15.6" textLength="56" stroke-width=".55" filter="url(#halo)"><tspan fill="#4285f4" stroke="#4285f4">G</tspan><tspan fill="#ea4335" stroke="#ea4335">o</tspan><tspan fill="#fbbc05" stroke="#fbbc05">o</tspan><tspan fill="#4285f4" stroke="#4285f4">g</tspan><tspan fill="#34a853" stroke="#34a853">l</tspan><tspan fill="#ea4335" stroke="#ea4335">e</tspan></text></svg>
    <div id="mfoot"></div>
    <svg class="abs" style="left:352px;top:349px" width="46" height="14" viewBox="0 0 46 14"><path d="M1.5 4 v5.5 h42 v-5.5" stroke="#fff" stroke-width="3" fill="none"/><path d="M1.5 4 v5.5 h42 v-5.5" stroke="#333" stroke-width="1.3" fill="none"/></svg>
  </div>
  <div id="imgpanel">
    <svg id="photo" class="abs" style="left:0;top:6px" width="150" height="100" viewBox="0 0 150 100">
      <defs>
        <linearGradient id="sky" x1="0" y1="0" x2="0" y2="1"><stop offset="0" stop-color="#1a80da"/><stop offset=".5" stop-color="#62a9e8"/><stop offset="1" stop-color="#dbeaf5"/></linearGradient>
        <linearGradient id="road" x1="0" y1="0" x2="0" y2="1"><stop offset="0" stop-color="#71879b"/><stop offset=".3" stop-color="#5f6b7a"/><stop offset="1" stop-color="#54575d"/></linearGradient>
        <filter id="pb" x="-5%" y="-5%" width="110%" height="110%"><feGaussianBlur stdDeviation=".55"/></filter>
      </defs>
      <rect width="150" height="100" fill="#5d6b7c"/>
      <g filter="url(#pb)">
        <rect x="-2" y="-2" width="154" height="45" fill="url(#sky)"/>
        <path d="M-2 35 q8 -3 14 -1 q6 -3 12 2 v12 h-26z" fill="#b9ceb6"/><path d="M0 38 q6 -2 10 1 q5 -2 9 1 l-2 5 h-17z" fill="#8fb08c"/>
        <path d="M4 44 q8 -5 18 -1 v8 h-18z" fill="#e0b31e"/>
        <path d="M-2 49 h26 v19 h-26z" fill="#6a3a2c"/>
        <path d="M-2 58 h24 v9 h-24z" fill="#4a2a25"/>
        <!-- right building -->
        <path d="M124 41 l26 -1 v33 h-26z" fill="#b4533a"/>
        <path d="M126 38 q10 -1 18 -1 l6 -2 v6 l-24 1z" fill="#2c3440"/>
        <path d="M128 66 h22 v7 h-22z" fill="#3a3a28"/>
        <path d="M144 42 h6 v24 h-6z" fill="#7d8a50"/>
        <rect x="131" y="46" width="5" height="4" fill="#d9c9a8"/><rect x="131" y="57" width="5" height="4" fill="#4a3a30"/>
        <!-- main building -->
        <path d="M74.8 30.3 L76 30.3 L76 26.7 L77.4 26.7 L77.4 23.2 L78.8 23.2 L78.8 19.7 L80.2 19.7 L80.2 16.2 L81.4 16.2 L81.4 12.7 L84.2 12.7 L84.2 16 L85.9 16 L85.9 19 L87.5 19 L87.5 21.8 L89.4 21.8 L89.4 23.9 L92.4 24.4 L105.1 22.3 L105.1 9.1 L108.9 9.1 L108.9 33.8 L125.9 33.8 L125.9 72.5 L108.9 71.9 L65.5 70.1 L22.1 67.2 L22.1 42.6 L32.6 40.2Z" fill="#bb523d"/>
        <path d="M22 42 l6 -2 l26 -5 l21 -5 v6 l-53 12z" fill="#b04a38"/>
        <path d="M105 23 v47 h4 v-47z" fill="#a8402f"/>
        <path d="M108 36 h18 v36 h-18z" fill="#c95e45"/>
        <path d="M108 36 q1 -8 9 -8 q8 0 9 8z" fill="#22344e"/>
        <path d="M114.5 17 l.5 11 h-1z" fill="#556"/>
        <path d="M108 36 h18 v3 h-18z" fill="#dcc9bb"/>
        <!-- chimneys -->
        <rect x="31" y="34" width="3" height="6" fill="#c46a55"/><rect x="40" y="31" width="3" height="9" fill="#b4483a"/><rect x="49" y="27" width="3" height="9" fill="#b4483a"/><rect x="60" y="24" width="3" height="10" fill="#b4483a"/>
        <!-- ground floor stone -->
        <path d="M23 58 l82 -2 v15 l-82 -4z" fill="#b8bcbb"/>
        <path d="M23 52 l60 -5 v6 l-60 5z" fill="#cf7d68"/>
        <path d="M26 55.5 l52 -3.5 v4.5 l-52 3.5z" fill="#6a3f3a"/>
        <!-- entrance -->
        <path d="M74 68 v-12 q0 -10 9 -10 q9 0 9 10 v14z" fill="#c6d2cd"/>
        <path d="M79 71 v-9 q0 -5 4.5 -5 q4.5 0 4.5 5 v9z" fill="#e08a76"/>
        <ellipse cx="82.5" cy="52" rx="1.8" ry="2.5" fill="#4a4030"/>
        <!-- windows -->
        <g fill="#223028"><rect x="34" y="63" width="5" height="5"/><rect x="43" y="63" width="5" height="5"/><rect x="53" y="62" width="6" height="6"/><rect x="64" y="62" width="8" height="9"/><rect x="95" y="61" width="8" height="8"/><rect x="113" y="62" width="4" height="7"/></g>
        <g fill="#d5ddd5"><rect x="52" y="41" width="2" height="5"/><rect x="55" y="40" width="2" height="5"/><rect x="64" y="38" width="2.5" height="5"/><rect x="68" y="37" width="2.5" height="5"/><rect x="77" y="34" width="3" height="6"/><rect x="84" y="33" width="4" height="7"/><rect x="97" y="30" width="4" height="7"/><rect x="35" y="44" width="2" height="4"/><rect x="46" y="42" width="2" height="5"/></g>
        <g fill="#5f7a8a"><rect x="84.8" y="34" width="2.5" height="5"/><rect x="97.8" y="31" width="2.5" height="5"/><rect x="80" y="20" width="5" height="6"/></g>
        <rect x="95" y="45" width="9" height="8" fill="#7a6a38"/><ellipse cx="116" cy="54" rx="2.5" ry="4" fill="#8a6a3a"/>
        <path d="M75 29 l14 -3 v4 l-14 4z" fill="#4a2f2c"/>
        <!-- poles -->
        <path d="M40.5 36 v34 M61.5 30 v40" stroke="#6a2f28" stroke-width="1.2"/>
        <path d="M105.5 55 v16" stroke="#777" stroke-width="1"/>
        <rect x="92" y="58" width="3" height="6" fill="#2a62c8"/>
        <!-- road -->
        <path d="M-2 67 l70 4 l84 4 v27 h-154z" fill="url(#road)"/>
        <path d="M-2 68 l40 2 l30 2 l40 3 l44 3" stroke="#7d8794" stroke-width="1.2" fill="none"/>
        <path d="M-2 78 l56 24 h-56z" fill="#7b7e7b"/>
        <path d="M0 80.5 l52 20" stroke="#b4b8be" stroke-width="1.1" fill="none"/>
        <path d="M84 79 l16 1.5 M50 75 l12 1 M128 84 l8 1" stroke="#aab0b8" stroke-width="1.5" fill="none"/>
        <!-- heli -->
        <ellipse cx="25.5" cy="19.5" rx="3" ry="1.7" fill="#18355e"/><path d="M25.5 16 v3 M28 19.5 l22 11" stroke="#4f7fb5" stroke-width=".4"/>
      </g>
    </svg>
    <div id="drop"></div>
  </div>
  <div class="ro" style="top:219px"></div>
  <div class="in" style="top:286px"></div>
  <div class="in" style="top:355px"><div class="caret"></div></div>
  <div class="in" style="top:424px"><div class="caret"></div></div>
  <div class="ro" style="top:550px"></div>
  <div class="ro" style="top:619px"></div>
  <div class="ro" style="top:687px"></div>
</div>
<div id="txt">
<span style="left:45px;top:16.5px;font-size:17.8px;letter-spacing:-0.111px;color:#3c4043">Pythagoras</span>
<span style="left:137px;top:15px;font-size:13px;letter-spacing:0.5px;color:#3c4043">®</span>
<span style="left:156px;top:16.5px;font-size:17.8px;letter-spacing:-1px;color:#3c4043">Web</span>
<span style="left:142.7px;top:55px;font-size:14.5px;letter-spacing:-0.375px;color:#202124">pim.pythagoras.se</span>
<span style="left:255.4px;top:55px;font-size:14.5px;letter-spacing:-0.296px;color:#5f6368">/py_datamanager_sales/pythagorasweb/index.html?mpMM=BUILDINGS&amp;mpSM=&amp;oCs=r5i19</span>
<span style="left:100.65px;top:185px;font-size:14.5px;letter-spacing:0.479px;color:#fff">Byggnad:</span>
<span style="left:171.8px;top:183.7px;font-size:20px;letter-spacing:0.65px;color:#fff;-webkit-text-stroke:0.65px #fff">HUVUDKONTORET</span>
<span style="left:367.3px;top:183.7px;font-size:20px;letter-spacing:0.922px;color:#fff;-webkit-text-stroke:0.65px #fff">(Münchenbryggeriet)</span>
<span style="left:119px;top:229.5px;font-size:14.7px;letter-spacing:0.267px;color:#3d6fa6">Allmänt</span>
<span style="left:203.8px;top:229.5px;font-size:14.7px;letter-spacing:-0.05px;color:#4a4a4a">Övrig information</span>
<span style="left:349.5px;top:229.5px;font-size:14.7px;letter-spacing:0.023px;color:#4a4a4a">Tilläggsobjekt</span>
<span style="left:474px;top:229.5px;font-size:14.7px;letter-spacing:-0.22px;color:#4a4a4a">Våningsplan</span>
<span style="left:586.7px;top:229.5px;font-size:14.7px;letter-spacing:-0.35px;color:#4a4a4a">Rum</span>
<span style="left:651px;top:229.5px;font-size:14.7px;letter-spacing:-0.5px;color:#4a4a4a">Media</span>
<span style="left:724.7px;top:229.5px;font-size:14.7px;letter-spacing:-0.263px;color:#4a4a4a">Lokalvård</span>
<span style="left:821px;top:229.5px;font-size:14.7px;letter-spacing:-0.671px;color:#4a4a4a">Personer</span>
<span style="left:912.3px;top:229.5px;font-size:14.7px;letter-spacing:0.3px;color:#4a4a4a">Avtal</span>
<span style="left:118.4px;top:293px;font-size:16.5px;letter-spacing:0.68px;color:#333;font-weight:bold">Objekt</span>
<span style="left:119.4px;top:625px;font-size:16.5px;letter-spacing:0.275px;color:#333;font-weight:bold">Areor</span>
<span style="left:120.5px;top:327.6px;font-size:12.5px;letter-spacing:0.125px;color:#5c5c5c">Namn:</span>
<span style="left:120.5px;top:396.8px;font-size:12.5px;letter-spacing:0.2px;color:#5c5c5c">Populärnamn:</span>
<span style="left:121.5px;top:464.6px;font-size:12.5px;letter-spacing:0.283px;color:#5c5c5c">Valuta:</span>
<span style="left:120.5px;top:533.6px;font-size:12.5px;letter-spacing:0.192px;color:#5c5c5c">Huvudsaklig verksamhetstyp:</span>
<span style="left:120.5px;top:660.3px;font-size:12.5px;letter-spacing:-0.025px;color:#5c5c5c">Bruksarea (BRA): (m²)</span>
<span style="left:120.5px;top:728.5px;font-size:12.5px;letter-spacing:0.09px;color:#5c5c5c">Nettoarea (NTA): (m²)</span>
<span style="left:120.5px;top:797.2px;font-size:12.5px;letter-spacing:0.095px;color:#5c5c5c">Bruttoarea (BTA): (m²)</span>
<span style="left:131.9px;top:356.3px;font-size:14.3px;letter-spacing:-0.425px;color:#555">HUVUDKONTORET</span>
<span style="left:131.9px;top:423.8px;font-size:14.3px;letter-spacing:0.031px;color:#555">Münchenbryggeriet</span>
<span style="left:131.7px;top:493px;font-size:14.3px;letter-spacing:-0.262px;color:#555;font-style:italic">SEK (Standard)</span>
<span style="left:131.9px;top:562px;font-size:14.3px;letter-spacing:0.08px;color:#555">Kontor</span>
<span style="left:131.9px;top:686.7px;font-size:14.3px;letter-spacing:0.52px;color:#555">70 233</span>
<span style="left:131.9px;top:756px;font-size:14.3px;letter-spacing:0.52px;color:#555">69 037</span>
<span style="left:132.5px;top:824.5px;font-size:14.3px;letter-spacing:0.6px;color:#555">11 748</span>
<span style="left:883.4px;top:831.9px;font-size:13.6px;letter-spacing:0.347px;color:#4a4a4a">Klicka och välj eller drag och släpp bilder här...</span>
<span style="left:763.4px;top:298.8px;font-size:17px;letter-spacing:0.575px;color:#000;-webkit-text-stroke:0.45px #000">Karta</span>
<span style="left:840.7px;top:299px;font-size:17px;letter-spacing:0.529px;color:#565656">Satellit</span>
<span style="left:853.7px;top:625px;font-size:10px;letter-spacing:0.167px;color:#222">Kortkommandon</span>
<span style="left:940.8px;top:625px;font-size:10px;letter-spacing:0.02px;color:#222">Kartdata ©2022 Google</span>
<span style="left:1058px;top:625px;font-size:10px;letter-spacing:0.25px;color:#222">100 m</span>
<span style="left:1146.4px;top:625px;font-size:10px;letter-spacing:-0.014px;color:#222">Användarvillkor</span>
<span style="left:1226px;top:625px;font-size:10px;letter-spacing:0.019px;color:#222">Rapportera ett kartfel</span>
</div>
</body>
</html>
